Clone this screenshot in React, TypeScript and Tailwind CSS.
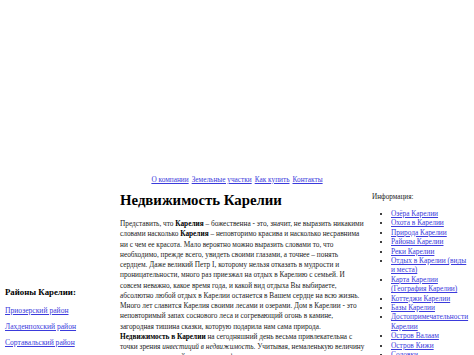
export default function App() {
  const districts = ["Приозерский район", "Лахденпохский район", "Сортавальский район"]

  const info = [
    "Озёра Карелии",
    "Охота в Карелии",
    "Природа Карелии",
    "Районы Карелии",
    "Реки Карелии",
    "Отдых в Карелии (виды и места)",
    "Карта Карелии (География Карелии)",
    "Коттеджи Карелии",
    "Базы Карелии",
    "Достопримечательности Карелии",
    "Остров Валаам",
    "Остров Кижи",
    "Соловки",
  ]

  return (
    <div className="h-[355px] overflow-hidden bg-white font-['Liberation_Serif',serif] text-[#222]">
      {/* empty header area */}
      <div className="h-[175px]" />

      {/* top menu */}
      <div className="flex justify-center gap-[3px] text-[7.3px] leading-[10px]">
        <a href="#" className="text-[#3b3bdc] underline">О компании</a>
        <a href="#" className="text-[#3b3bdc] underline">Земельные участки</a>
        <a href="#" className="text-[#3b3bdc] underline">Как купить</a>
        <a href="#" className="text-[#3b3bdc] underline">Контакты</a>
      </div>

      <div className="flex">
        {/* left column */}
        <div className="w-[120px] shrink-0 pl-[5px] pt-[102px]">
          <div className="text-[8.8px] font-bold leading-[11px] text-black">Районы Карелии:</div>
          <div className="mt-[7px] flex flex-col gap-[5px] text-[7.6px] leading-[11px]">
            {districts.map((d) => (
              <a key={d} href="#" className="text-[#3b3bdc] underline">{d}</a>
            ))}
          </div>
        </div>

        {/* main content */}
        <div className="w-[249px] shrink-0">
          <h1 className="mt-[6px] text-[14.8px] font-bold leading-[18px] text-black">Недвижимость Карелии</h1>
          <p className="mt-[10px] whitespace-nowrap text-[7.3px] leading-[10.25px]">
            Представить, что <b className="text-black">Карелия</b> – божественна - это, значит, не выразить никакими
            <br />
            словами насколько <b className="text-black">Карелия</b> – неповторимо красива и насколько несравнима
            <br />
            ни с чем ее красота. Мало вероятно можно выразить словами то, что
            <br />
            необходимо, прежде всего, увидеть своими глазами, а точнее – понять
            <br />
            сердцем. Даже великий Петр I, которому нельзя отказать в мудрости и
            <br />
            проницательности, много раз приезжал на отдых в Карелию с семьей. И
            <br />
            совсем неважно, какое время года, и какой вид отдыха Вы выбираете,
            <br />
            абсолютно любой отдых в Карелии останется в Вашем сердце на всю жизнь.
            <br />
            Много лет славится Карелия своими лесами и озерами. Дом в Карелии - это
            <br />
            неповторимый запах соснового леса и согревающий огонь в камине,
            <br />
            загородная тишина сказки, которую подарила нам сама природа.
            <br />
            <b className="text-black">Недвижимость в Карелии</b> на сегодняшний день весьма привлекательна с
            <br />
            точки зрения <i>инвестиций в недвижимость</i>. Учитывая, немаленькую величину
            <br />
            позитивных позиций – развитая инфраструктура региона, природная красота,
          </p>
        </div>

        {/* right column */}
        <div className="min-w-0 flex-1 pl-[3px] pr-[7px] pt-[7px]">
          <div className="text-[7.2px] leading-[10px]">Информация:</div>
          <ul className="mt-[7px] list-disc pl-[19px] text-[7.4px] leading-[9.4px] marker:text-black">
            {info.map((item) => (
              <li key={item}>
                <a href="#" className="text-[#3b3bdc] underline">{item}</a>
              </li>
            ))}
          </ul>
        </div>
      </div>
    </div>
  )
}
